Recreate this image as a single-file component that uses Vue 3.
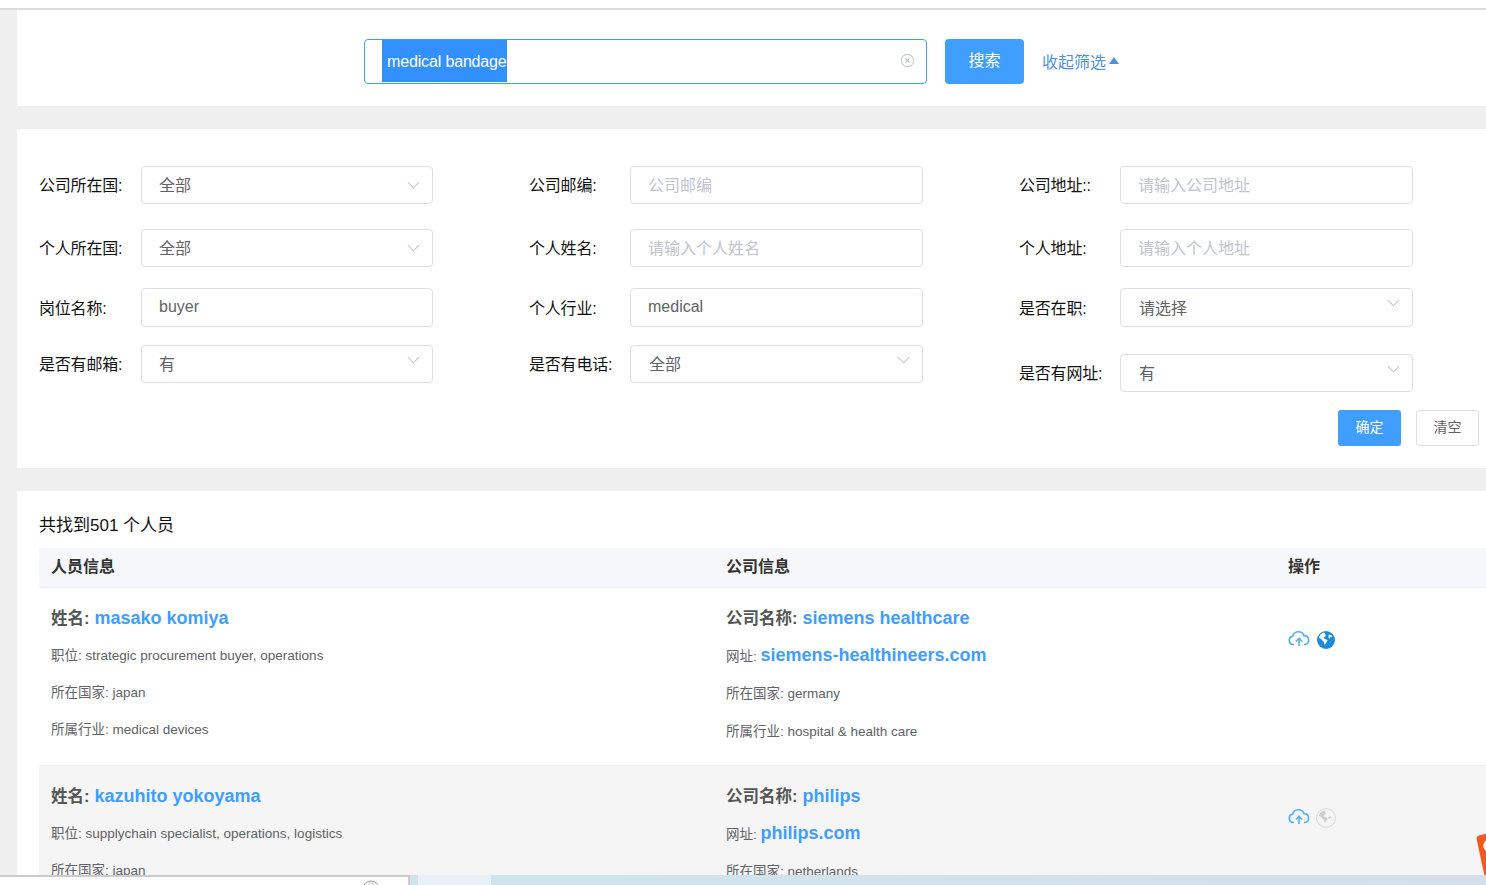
<script setup>
const rowA = [
  { label: '公司所在国:', type: 'select', value: '全部' },
  { label: '公司邮编:', type: 'input', placeholder: '公司邮编' },
  { label: '公司地址::', type: 'input', placeholder: '请输入公司地址' },
];
const rowB = [
  { label: '个人所在国:', type: 'select', value: '全部' },
  { label: '个人姓名:', type: 'input', placeholder: '请输入个人姓名' },
  { label: '个人地址:', type: 'input', placeholder: '请输入个人地址' },
];
const rowC = [
  { label: '岗位名称:', type: 'input', value: 'buyer' },
  { label: '个人行业:', type: 'input', value: 'medical' },
  { label: '是否在职:', type: 'select', value: '请选择', high: true },
];
const rowD = [
  { label: '是否有邮箱:', type: 'select', value: '有', high: true },
  { label: '是否有电话:', type: 'select', value: '全部', high: true },
  { label: '是否有网址:', type: 'select', value: '有', high: true, low: true },
];
const formRows = [
  { cells: rowA, cls: 'row-a' },
  { cells: rowB, cls: 'row-b' },
  { cells: rowC, cls: 'row-c' },
  { cells: rowD, cls: 'row-d' },
];
const people = [
  {
    name: 'masako komiya', title: 'strategic procurement buyer, operations', country: 'japan', industry: 'medical devices',
    company: 'siemens healthcare', site: 'siemens-healthineers.com', companyCountry: 'germany', companyIndustry: 'hospital & health care',
    hasSite: true,
  },
  {
    name: 'kazuhito yokoyama', title: 'supplychain specialist, operations, logistics', country: 'japan', industry: 'medical devices',
    company: 'philips', site: 'philips.com', companyCountry: 'netherlands', companyIndustry: 'hospital & health care',
    hasSite: false,
  },
];
</script>

<template>
  <div class="page">
    <div class="topline"></div>

    <section class="panel search-panel">
      <div class="search-box">
        <span class="selected">medical bandage</span>
        <svg class="clear" viewBox="0 0 16 16" width="15" height="15">
          <circle cx="8" cy="8" r="6.6" fill="none" stroke="#c9ccd3" stroke-width="1.2" />
          <path d="M5.8 5.8l4.4 4.4M10.2 5.8l-4.4 4.4" stroke="#b4b8c0" stroke-width="1.1" />
        </svg>
      </div>
      <button class="search-btn">搜索</button>
      <a class="collapse">收起筛选<i class="tri"></i></a>
    </section>

    <section class="panel form-panel">
      <div v-for="row in formRows" :key="row.cls" class="form-row" :class="row.cls">
        <div v-for="cell in row.cells" :key="cell.label" class="cell" :class="{ low: cell.low }">
          <label>{{ cell.label }}</label>
          <div v-if="cell.type === 'select'" class="control select">
            <span>{{ cell.value }}</span>
            <svg class="chev" :class="{ high: cell.high }" viewBox="0 0 14 8" width="13" height="8">
              <path d="M1 1l6 6 6-6" fill="none" stroke="#c0c4cc" stroke-width="1.1" />
            </svg>
          </div>
          <input v-else class="control" :value="cell.value" :placeholder="cell.placeholder" />
        </div>
      </div>
      <div class="form-actions">
        <button class="ok">确定</button>
        <button class="reset">清空</button>
      </div>
    </section>

    <section class="panel result-panel">
      <div class="total">共找到501 个人员</div>
      <div class="thead">
        <div>人员信息</div>
        <div>公司信息</div>
        <div>操作</div>
      </div>
      <div v-for="p in people" :key="p.name" class="trow">
        <div class="col">
          <div class="big"><b>姓名:</b> <a>{{ p.name }}</a></div>
          <div class="line">职位: {{ p.title }}</div>
          <div class="line">所在国家: {{ p.country }}</div>
          <div class="line">所属行业: {{ p.industry }}</div>
        </div>
        <div class="col company">
          <div class="big"><b>公司名称:</b> <a>{{ p.company }}</a></div>
          <div class="line site">网址: <a>{{ p.site }}</a></div>
          <div class="line">所在国家: {{ p.companyCountry }}</div>
          <div class="line">所属行业: {{ p.companyIndustry }}</div>
        </div>
        <div class="ops">
          <svg viewBox="0 0 22 17" width="22" height="17">
            <path d="M6 14.5H5.2A4.2 4.2 0 0 1 4.6 6.2 6 6 0 0 1 16 5.6a4.5 4.5 0 0 1 1 8.9h-1" fill="none" stroke="#5ab0ee" stroke-width="1.7" />
            <path d="M11 16V8.5M7.8 11.5L11 8.3l3.2 3.2" fill="none" stroke="#5ab0ee" stroke-width="1.6" />
          </svg>
          <svg viewBox="0 0 20 20" width="20" height="20">
            <template v-if="p.hasSite">
              <circle cx="10" cy="10" r="9" fill="#1f8ad9" />
              <path d="M8 2.5C5.5 3 3.5 5 3 7.5c1 1 2.5 1.2 3 2.5.4 1 1.6 1 2 2 .3.8 0 2 .7 2.5 1-.4 1.3-2 2.3-2.8.8-.7.4-1.8-.6-2.2-1-.4-2.4-.6-2.6-1.6-.2-1 1.4-1 1.8-1.9.3-.7-.2-1.9-1.6-3.5z" fill="#fff" />
              <path d="M13 4.5c1 .6 2.4.5 3.4 1.6-.3.9-1.2.5-1.8 1-.6.5-.5 1.6-1.2 1.5-.7-.1-.9-1.2-.8-2 .1-.8-.4-1.4.4-2.1z" fill="#fff" />
            </template>
            <template v-else>
              <circle cx="10" cy="10" r="9.4" fill="#f5f5f5" stroke="#d8d8d8" stroke-width="1" />
              <path d="M8 2.5C5.5 3 3.5 5 3 7.5c1 1 2.5 1.2 3 2.5.4 1 1.6 1 2 2 .3.8 0 2 .7 2.5 1-.4 1.3-2 2.3-2.8.8-.7.4-1.8-.6-2.2-1-.4-2.4-.6-2.6-1.6-.2-1 1.4-1 1.8-1.9.3-.7-.2-1.9-1.6-3.5z" fill="#cfcfcf" />
              <path d="M13 8.5c1 .2 2 0 3 .4-.3.9-1.2.8-1.8 1.2-.6.4-1 1-1.5.6-.4-.5-.5-1.6.3-2.2z" fill="#cfcfcf" />
            </template>
          </svg>
        </div>
      </div>
    </section>

    <!-- other window poking in at the bottom of the capture -->
    <div class="float-tag"><i></i></div>
    <div class="under-window">
      <div class="under-left">
        <svg class="under-globe" viewBox="0 0 18 18" width="18" height="18">
          <circle cx="9" cy="9" r="8" fill="none" stroke="#9c98b0" stroke-width="1" />
          <path d="M1 9h16M9 1c-4 4-4 12 0 16M9 1c4 4 4 12 0 16" fill="none" stroke="#bbb8c8" stroke-width="1" />
        </svg>
      </div>
      <div class="under-edge"></div>
      <div class="under-mid"></div>
      <div class="under-right"></div>
    </div>
  </div>
</template>

<style scoped>
.page {
  position: relative;
  width: 1486px;
  height: 885px;
  overflow: hidden;
  box-sizing: border-box;
  padding-left: 17px;
  background: #efefef;
  font-family: "Liberation Sans", "Noto Sans CJK SC", sans-serif;
  font-size: 16px;
  color: #111;
}
.topline {
  height: 10px;
  margin-left: -17px;
  box-sizing: border-box;
  background: #fff;
  border-bottom: 2px solid #dcdcdc;
}
.panel {
  background: #fff;
}
.search-panel {
  display: flex;
  align-items: flex-start;
  height: 96px;
  box-sizing: border-box;
  padding: 29px 0 0 347px;
  margin-bottom: 23px;
}
.search-box {
  display: flex;
  align-items: center;
  justify-content: space-between;
  width: 563px;
  height: 45px;
  box-sizing: border-box;
  border: 1px solid #409eff;
  border-radius: 4px;
  padding: 0 11px 2px 17px;
}
.selected {
  display: block;
  height: 42px;
  line-height: 44px;
  background: #3390ff;
  color: #fff;
  padding-left: 5px;
  letter-spacing: -0.15px;
}
.clear {
  display: block;
}
.search-btn {
  width: 79px;
  height: 45px;
  margin-left: 18px;
  border: 0;
  border-radius: 4px;
  background: #409eff;
  color: #fff;
  font: inherit;
  padding: 0 0 5px;
}
.collapse {
  display: flex;
  align-items: center;
  height: 45px;
  margin-left: 18px;
  padding-bottom: 1px;
  color: #4f8fe0;
  box-sizing: border-box;
}
.tri {
  width: 0;
  height: 0;
  margin: 0 0 2px 3px;
  border-left: 5px solid transparent;
  border-right: 5px solid transparent;
  border-bottom: 7px solid #4f8fe0;
}
.form-panel {
  height: 339px;
  box-sizing: border-box;
  padding: 37px 0 0 22px;
  margin-bottom: 23px;
}
.form-row {
  display: grid;
  grid-template-columns: repeat(3, 490px);
  align-items: start;
}
.row-a { margin-bottom: 25px; }
.row-b { margin-bottom: 21px; }
.row-c { margin-bottom: 18px; }
.row-c .control { height: 39px; }
.row-a input,
.row-b input { padding-top: 1px; }
.row-c input { padding-bottom: 2px; }
.cell {
  display: flex;
  align-items: center;
}
.cell.low {
  margin-top: 9px;
}
.cell label {
  width: 102px;
  flex: none;
  padding-bottom: 2px;
  white-space: nowrap;
  letter-spacing: -0.2px;
}
.cell:nth-child(n + 2) label {
  width: 101px;
}
.control {
  display: block;
  width: 292px;
  height: 38px;
  box-sizing: border-box;
  padding: 0 17px;
  border: 1px solid #dcdfe6;
  border-radius: 4px;
  background: #fff;
  font: inherit;
  color: #606266;
  outline: none;
}
.control::placeholder {
  color: #c0c4cc;
}
.cell:nth-child(n + 2) .control {
  width: 293px;
}
.cell:nth-child(n + 2) .select {
  padding-left: 18px;
}
.select {
  display: flex;
  align-items: center;
  justify-content: space-between;
  padding-right: 12px;
}
.select span {
  padding-bottom: 2px;
}
.chev.high {
  margin-top: -9px;
}
.form-actions {
  display: flex;
  justify-content: flex-end;
  gap: 15px;
  margin: 18px 7px 0 0;
}
.form-actions button {
  width: 63px;
  height: 36px;
  padding: 0 0 4px;
  border-radius: 3px;
  font: inherit;
  font-size: 14px;
}
.ok {
  border: 0;
  background: #409eff;
  color: #fff;
}
.reset {
  border: 1px solid #dcdfe6;
  background: #fff;
  color: #606266;
}
.result-panel {
  padding: 0 0 0 22px;
  height: 500px;
}
.total {
  height: 57px;
  line-height: 69px;
  font-size: 17px;
}
.thead,
.trow {
  display: grid;
  grid-template-columns: 675px 562px 1fr;
}
.thead {
  height: 40px;
  box-sizing: border-box;
  line-height: 38px;
  background: #f5f7fa;
  border-bottom: 1px solid #ebeef5;
  font-weight: 700;
  color: #333;
}
.thead > div {
  padding-left: 12px;
}
.trow {
  height: 178px;
  box-sizing: border-box;
  border-bottom: 1px solid #ebeef5;
}
.trow + .trow {
  background: #f5f5f5;
}
.col {
  padding: 19px 0 0 12px;
}
.big {
  height: 22px;
  line-height: 22px;
  font-size: 18px;
  font-weight: 700;
  color: #555;
  margin-bottom: 15px;
}
.big a,
.line a {
  color: #409eff;
  font-weight: 700;
}
.big b {
  font-size: 16.5px;
  font-weight: 700;
}
.line {
  height: 22px;
  line-height: 24px;
  font-size: 13.5px;
  color: #606266;
  margin-bottom: 15px;
}
.company .line {
  margin-bottom: 16px;
}
.company .site {
  line-height: 22px;
}
.site a {
  font-size: 18px;
}
.ops {
  display: flex;
  align-items: flex-start;
  gap: 6px;
  padding: 42px 0 0 12px;
}
.under-window {
  position: absolute;
  left: 0;
  right: 0;
  bottom: 0;
  height: 10px;
  display: flex;
}
.under-left {
  position: relative;
  width: 410px;
  box-sizing: border-box;
  background: #fff;
  border-top: 2px solid #ccc;
  border-right: 2px solid #ccc;
  overflow: hidden;
}
.under-globe {
  position: absolute;
  left: 362px;
  top: 3px;
}
.under-edge {
  width: 8px;
  background: #cfe4ec;
}
.under-mid {
  width: 73px;
  background: #e8f2f6;
}
.under-right {
  flex: 1;
  background: linear-gradient(90deg, #cfe4ec, #d4dfeb);
}
.float-tag {
  position: absolute;
  left: 1476px;
  top: 836px;
  width: 26px;
  height: 42px;
  background: #f4581f;
  border-radius: 3px;
  transform: rotate(-12deg);
  transform-origin: left top;
}
.float-tag i {
  position: absolute;
  left: 5px;
  top: 6px;
  width: 13px;
  height: 13px;
  border-radius: 50%;
  background: #fff;
}
</style>

<style>
body {
  margin: 0;
  overflow: hidden;
}
</style>
